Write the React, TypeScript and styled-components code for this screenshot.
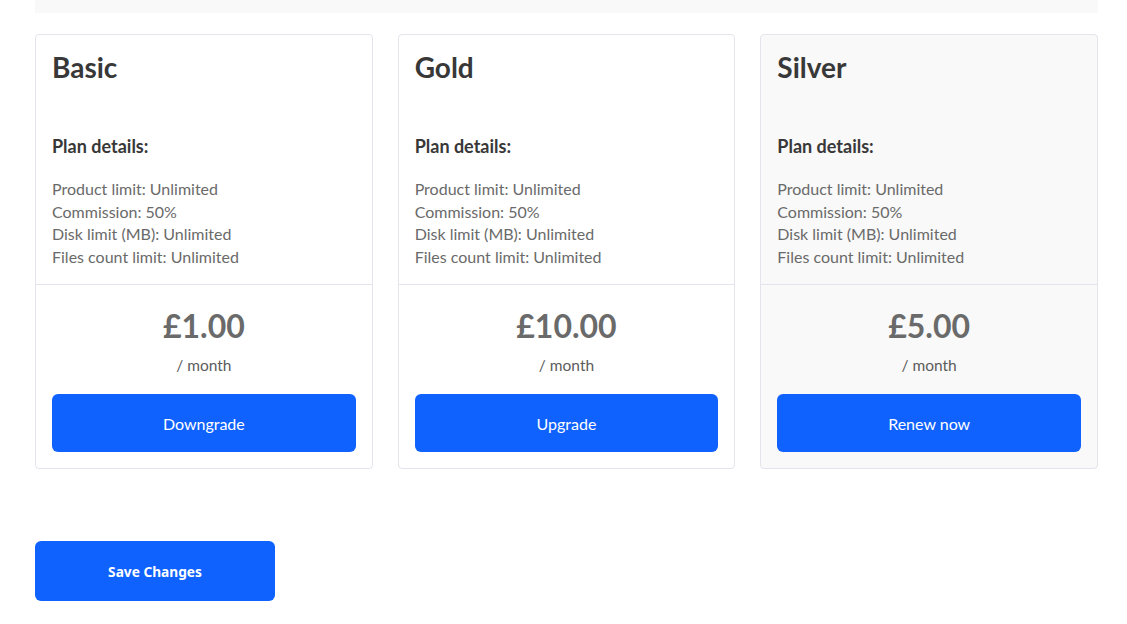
import React from 'react'
import styled, { createGlobalStyle } from 'styled-components'

const GlobalStyle = createGlobalStyle`
    body {
        margin: 0;
        background: #fff;
        font-family: Lato, "Liberation Sans", sans-serif;
    }
`

const Page = styled.div`
    width: 1063px;
    padding-left: 35px;
`

const TopBar = styled.div`
    height: 13px;
    background: #f9f9f9;
    margin-bottom: 21px;
`

const Plans = styled.div`
    display: grid;
    grid-template-columns: repeat(3, 1fr);
    gap: 25px;
`

const Card = styled.div<{ $active?: boolean }>`
    border: 1px solid #e4e4ec;
    border-radius: 4px;
    background: ${p => (p.$active ? '#f9f9f9' : '#fff')};
    display: flex;
    flex-direction: column;
`

const CardBody = styled.div`
    padding: 16px 16px 16px;
    border-bottom: 1px solid #e4e4ec;
`

const Title = styled.h2`
    margin: 0 0 51px;
    font-size: 28px;
    line-height: 1.2;
    font-weight: 700;
    color: #383838;
`

const DetailsHead = styled.h4`
    margin: 0 0 21px;
    font-size: 18px;
    line-height: 1.2;
    font-weight: 700;
    color: #383838;
`

const Details = styled.ul`
    list-style: none;
    margin: 0;
    padding: 0;
    font-size: 16px;
    line-height: 22.5px;
    color: #6a6a6a;
`

const CardFooter = styled.div`
    padding: 22px 16px 16px;
    display: flex;
    flex-direction: column;
    align-items: center;
`

const Price = styled.div`
    font-size: 32px;
    line-height: 1.2;
    font-weight: 700;
    color: #6a6a6a;
`

const Period = styled.div`
    margin-top: 8px;
    font-size: 15.5px;
    line-height: 22.5px;
    color: #5c5c5c;
`

const PlanButton = styled.button`
    margin-top: 18px;
    width: 100%;
    height: 58px;
    border: none;
    border-radius: 6px;
    background: #0f62fe;
    color: #fff;
    font-family: Lato, "Liberation Sans", sans-serif;
    font-size: 16px;
    cursor: pointer;
`

const SaveButton = styled.button`
    margin-top: 72px;
    width: 240px;
    height: 60px;
    border: none;
    border-radius: 6px;
    background: #0f62fe;
    color: #fff;
    font-family: "Noto Sans", "Liberation Sans", sans-serif;
    font-size: 13.7px;
    font-weight: 700;
    cursor: pointer;
`

const plans = [
    { name: 'Basic', price: '£1.00', action: 'Downgrade' },
    { name: 'Gold', price: '£10.00', action: 'Upgrade' },
    { name: 'Silver', price: '£5.00', action: 'Renew now', active: true },
]

const details = [
    'Product limit: Unlimited',
    'Commission: 50%',
    'Disk limit (MB): Unlimited',
    'Files count limit: Unlimited',
]

const App: React.FC = () => {
    return (
        <Page>
            <GlobalStyle />
            <TopBar />
            <Plans>
                {plans.map(plan => (
                    <Card key={plan.name} $active={plan.active}>
                        <CardBody>
                            <Title>{plan.name}</Title>
                            <DetailsHead>Plan details:</DetailsHead>
                            <Details>
                                {details.map(d => <li key={d}>{d}</li>)}
                            </Details>
                        </CardBody>
                        <CardFooter>
                            <Price>{plan.price}</Price>
                            <Period>/ month</Period>
                            <PlanButton>{plan.action}</PlanButton>
                        </CardFooter>
                    </Card>
                ))}
            </Plans>
            <SaveButton>Save Changes</SaveButton>
        </Page>
    )
}

export default App
